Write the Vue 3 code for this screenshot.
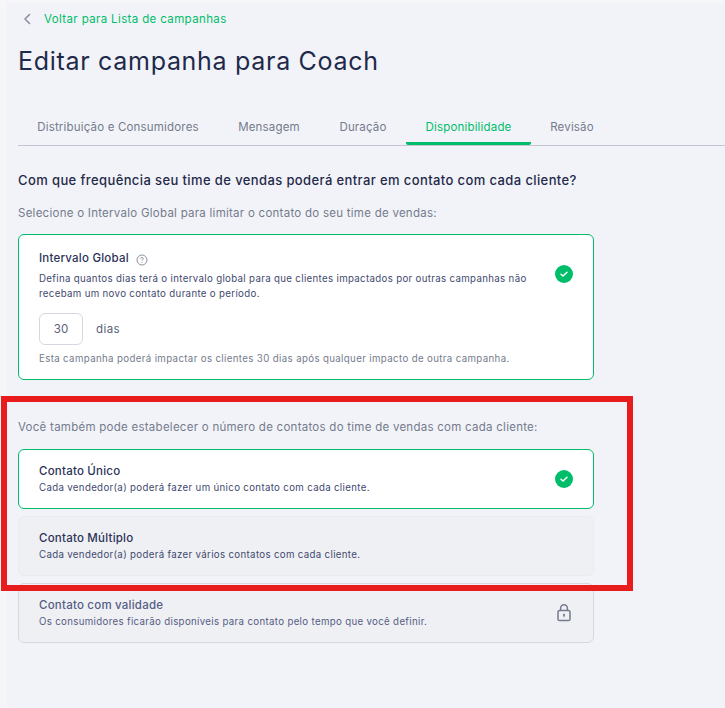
<script setup>
const tabs = [
  { label: 'Distribuição e Consumidores', w: 200 },
  { label: 'Mensagem', w: 102 },
  { label: 'Duração', w: 86 },
  { label: 'Disponibilidade', w: 125, active: true },
  { label: 'Revisão', w: 82 },
]
</script>

<template>
  <div class="page">
    <main class="main">
      <a class="back">
        <svg width="8" height="12" viewBox="0 0 8 12" class="chev"><path d="M6.5 1.5 2 6l4.5 4.5" fill="none" stroke="#8b91a0" stroke-width="1.6" stroke-linecap="round" stroke-linejoin="round"/></svg>
        <span>Voltar para Lista de campanhas</span>
      </a>
      <h1 class="title">Editar campanha para Coach</h1>

      <nav class="tabs">
        <div v-for="t in tabs" :key="t.label" class="tab" :class="{ active: t.active }" :style="{ width: t.w + 'px' }">{{ t.label }}</div>
      </nav>

      <h2 class="question">Com que frequência seu time de vendas poderá entrar em contato com cada cliente?</h2>
      <p class="lead first">Selecione o Intervalo Global para limitar o contato do seu time de vendas:</p>

      <section class="card selected global">
        <div class="body">
          <div class="name">Intervalo Global
            <svg class="help" width="12" height="12" viewBox="0 0 12 12"><circle cx="6" cy="6" r="5" fill="none" stroke="#8b91a0" stroke-width="1"/><path d="M4.6 4.8c0-.8.6-1.3 1.4-1.3s1.4.5 1.4 1.2c0 1-1.4 1-1.4 2" fill="none" stroke="#8b91a0" stroke-width=".9"/><circle cx="6" cy="8.5" r=".55" fill="#8b91a0"/></svg>
          </div>
          <p class="desc">Defina quantos dias terá o intervalo global para que clientes impactados por outras campanhas não<br>recebam um novo contato durante o período.</p>
          <div class="days">
            <div class="input">30</div>
            <span class="unit">dias</span>
          </div>
          <p class="note">Esta campanha poderá impactar os clientes 30 dias após qualquer impacto de outra campanha.</p>
        </div>
        <svg class="check" width="18" height="18" viewBox="0 0 18 18"><circle cx="9" cy="9" r="9" fill="#00bd6a"/><path d="M6 9.2 8 11l4-3.8" fill="none" stroke="#fff" stroke-width="1.5" stroke-linecap="round" stroke-linejoin="round"/></svg>
      </section>

      <p class="lead second">Você também pode estabelecer o número de contatos do time de vendas com cada cliente:</p>

      <section class="card selected row">
        <div class="body">
          <div class="name">Contato Único</div>
          <p class="desc">Cada vendedor(a) poderá fazer um único contato com cada cliente.</p>
        </div>
        <svg class="check" width="18" height="18" viewBox="0 0 18 18"><circle cx="9" cy="9" r="9" fill="#00bd6a"/><path d="M6 9.2 8 11l4-3.8" fill="none" stroke="#fff" stroke-width="1.5" stroke-linecap="round" stroke-linejoin="round"/></svg>
      </section>

      <section class="card muted row">
        <div class="body">
          <div class="name">Contato Múltiplo</div>
          <p class="desc">Cada vendedor(a) poderá fazer vários contatos com cada cliente.</p>
        </div>
      </section>

      <section class="card locked row">
        <div class="body">
          <div class="name">Contato com validade</div>
          <p class="desc">Os consumidores ficarão disponíveis para contato pelo tempo que você definir.</p>
        </div>
        <svg class="lock" width="14" height="18" viewBox="0 0 14 18"><rect x="1" y="6.5" width="12" height="10" rx="1.6" fill="none" stroke="#747b8d" stroke-width="1.5"/><path d="M3.6 6.5V4.2a3.4 3.4 0 0 1 6.8 0v2.3" fill="none" stroke="#747b8d" stroke-width="1.5"/><circle cx="7" cy="10.8" r="1.1" fill="#747b8d"/><path d="M7 11v2.2" stroke="#747b8d" stroke-width="1"/></svg>
      </section>
    </main>
    <div class="highlight"></div>
  </div>
</template>

<style>
html, body { margin: 0; background: #f5f6f8; }
</style>

<style scoped>
.page {
  position: relative;
  width: 725px;
  height: 708px;
  overflow: hidden;
  padding: 3px 0 0 7px;
  box-sizing: border-box;
  background: #f6f6f8;
  font-family: Inter, "Open Sans", sans-serif;
}
.main {
  height: 705px;
  background: #f2f3f8;
  padding-left: 11px;
  padding-top: 8px;
  box-sizing: border-box;
}
.back {
  display: flex;
  align-items: center;
  height: 16px;
  padding-left: 5px;
  color: #00bd6a;
  font-size: 11.5px;
  letter-spacing: 0.37px;
}
.chev { margin-right: 13px; }
.title {
  margin: 16px 0 0;
  font-size: 25px;
  line-height: 36px;
  font-weight: 400;
  color: #1f2a4a;
  letter-spacing: 0.7px;
}
.tabs {
  display: flex;
  width: 707px;
  height: 36px;
  margin-top: 30px;
  border-bottom: 1px solid #c3c6d3;
  box-sizing: content-box;
}
.tab {
  height: 36px;
  box-sizing: border-box;
  text-align: center;
  font-size: 11.5px;
  line-height: 36px;
  color: #747b8d;
  white-space: nowrap;
  letter-spacing: 0.18px;
  border-bottom: 3px solid transparent;
}
.tab.active { color: #00bd6a; border-bottom-color: #00bd6a; border-radius: 0 0 2px 2px; }
.question {
  margin: 25px 0 0;
  font-size: 13px;
  line-height: 18px;
  font-weight: 500;
  color: #1f2a4a;
  letter-spacing: 0.39px;
}
.lead {
  margin: 0;
  font-size: 11.5px;
  line-height: 16px;
  color: #747b8d;
  letter-spacing: 0.26px;
}
.lead.first { margin-top: 16px; }
.lead.second { margin-top: 39px; }
.card {
  display: flex;
  align-items: center;
  width: 576px;
  box-sizing: border-box;
  border-radius: 6px;
  padding-left: 20px;
  padding-right: 20px;
}
.body { flex: 1; min-width: 0; }
.selected { background: #fff; border: 1px solid #00bd6a; }
.muted { background: #eff0f3; border: 1px solid #ebecf1; }
.locked { background: #eff0f3; border: 1px solid #d6d8e1; }
.global {
  height: 146px;
  margin-top: 13px;
  align-items: flex-start;
}
.global .body { padding-top: 15px; }
.global .check { margin-top: 30px; }
.row { height: 60px; }
.row .desc { margin-top: 1px; }
.row + .row { margin-top: 7px; }
.lead.second + .card { margin-top: 14px; }
.name {
  display: flex;
  align-items: center;
  font-size: 11.5px;
  line-height: 16px;
  font-weight: 500;
  color: #2b3358;
  letter-spacing: 0.22px;
}
.help { margin-left: 7px; margin-top: 3px; }
.desc {
  margin: 5px 0 0;
  font-size: 9.7px;
  line-height: 15px;
  color: #3f4a70;
  letter-spacing: 0.33px;
}
.locked .name, .locked .desc { color: #555d85; }
.days { display: flex; align-items: center; margin-top: 12px; }
.input {
  width: 44px;
  height: 32px;
  box-sizing: border-box;
  border: 1px solid #d6d8e1;
  border-radius: 6px;
  text-align: center;
  font-size: 11.5px;
  line-height: 30px;
  color: #5a6178;
}
.unit { margin-left: 13px; font-size: 11.5px; color: #5a6178; letter-spacing: 0.4px; }
.note { margin: 7px 0 0; font-size: 9.7px; line-height: 14px; color: #747b8d; letter-spacing: 0.36px; }
.check, .lock { flex: none; }
.lock { margin-right: 2px; }
.highlight {
  position: absolute;
  left: 1px;
  top: 396px;
  width: 632px;
  height: 195px;
  box-sizing: border-box;
  border: 6px solid #e81c1c;
  pointer-events: none;
}
</style>
